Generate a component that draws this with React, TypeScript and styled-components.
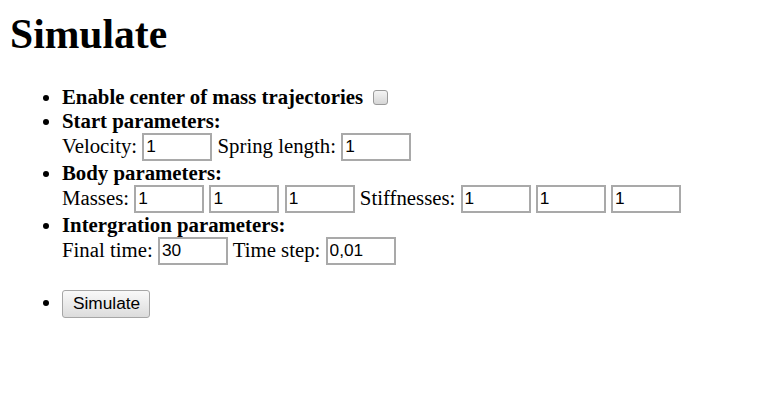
import React from "react";
import styled, { createGlobalStyle } from "styled-components";

const GlobalStyle = createGlobalStyle`
  html, body { background: #ffffff; }
  body {
    margin: 10px;
    font-family: "Liberation Serif", "Times New Roman", serif;
    font-size: 20.8px;
    color: #000000;
  }
`;

const Title = styled.h1`
  font-size: 41.6px;
  font-weight: bold;
  margin: 0 0 26.8px 0;
  line-height: normal;
`;

const List = styled.ul`
  margin: 0;
  padding-left: 52px;
  list-style: disc;
`;

const Item = styled.li<{ $gap?: number }>`
  margin-top: ${(p) => p.$gap ?? 0}px;
`;

const Heading = styled.b`
  font-weight: bold;
`;

const Field = styled.input`
  box-sizing: border-box;
  width: 70px;
  height: 28px;
  margin: 0;
  padding: 1px 2px;
  border: 2px solid #a9a9a9;
  border-radius: 0;
  font-family: "Liberation Sans", Arial, sans-serif;
  font-size: 17.3px;
  color: #000;
  background: #fff;
  vertical-align: baseline;
  outline: none;
`;

const Check = styled.input`
  appearance: none;
  -webkit-appearance: none;
  box-sizing: border-box;
  width: 15px;
  height: 15px;
  margin: 0 4px 0 5px;
  border: 1px solid #9a9a9a;
  border-radius: 3px;
  background: linear-gradient(#f4f4f4, #d6d6d6);
  vertical-align: -1px;
`;

const Button = styled.button`
  box-sizing: border-box;
  width: 88px;
  height: 28px;
  margin: 0;
  padding: 0 10px;
  border: 1px solid #a6a6a6;
  border-radius: 3px;
  background: linear-gradient(#f9f9f9, #dcdcdc);
  font-family: "Liberation Sans", Arial, sans-serif;
  font-size: 17.3px;
  color: #000;
`;

export default function App() {
  return (
    <>
      <GlobalStyle />
      <Title>Simulate</Title>
      <List>
        <Item>
          <Heading>Enable center of mass trajectories</Heading> <Check type="checkbox" />
        </Item>
        <Item>
          <Heading>Start parameters:</Heading>
          <br />
          Velocity: <Field defaultValue="1" /> Spring length: <Field defaultValue="1" />
        </Item>
        <Item>
          <Heading>Body parameters:</Heading>
          <br />
          Masses: <Field defaultValue="1" /> <Field defaultValue="1" /> <Field defaultValue="1" />{" "}
          Stiffnesses: <Field defaultValue="1" /> <Field defaultValue="1" /> <Field defaultValue="1" />
        </Item>
        <Item>
          <Heading>Intergration parameters:</Heading>
          <br />
          Final time: <Field defaultValue="30" /> Time step: <Field defaultValue="0,01" />
        </Item>
        <Item $gap={25}>
          <Button>Simulate</Button>
        </Item>
      </List>
    </>
  );
}
